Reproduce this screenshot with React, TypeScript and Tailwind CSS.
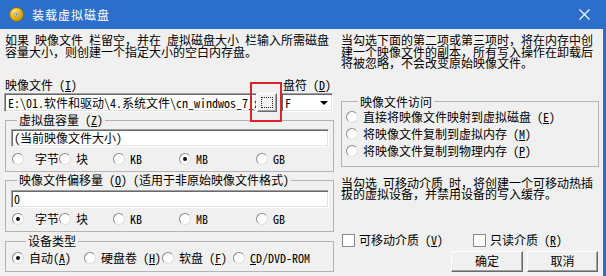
import React from "react";

const F = "font-['Noto_Sans_Mono_CJK_SC','Noto_Sans_CJK_SC',monospace]";
const sunken =
  "bg-white border border-t-[#a0a0a0] border-l-[#a0a0a0] border-r-white border-b-white shadow-[inset_1px_1px_0_#696969,inset_-1px_-1px_0_#e3e3e3]";
const raised =
  "bg-[#f0f0f0] border border-t-white border-l-white border-r-[#696969] border-b-[#696969] shadow-[inset_-1px_-1px_0_#a0a0a0]";

function K({ k }: { k: string }) {
  return (
    <>
      (<span className="underline underline-offset-[1px]">{k}</span>)
    </>
  );
}

function Radio({ on }: { on?: boolean }) {
  return (
    <span className="flex h-[12px] w-[12px] shrink-0 items-center justify-center rounded-full border border-t-[#8c8c8c] border-l-[#8c8c8c] border-r-[#dedede] border-b-[#dedede] bg-white">
      {on && <span className="h-[4px] w-[4px] rounded-full bg-[#111]" />}
    </span>
  );
}

function Opt({ on, className = "", children }: { on?: boolean; className?: string; children: React.ReactNode }) {
  return (
    <div className={`flex h-[12px] shrink-0 items-center gap-[5px] ${className}`}>
      <Radio on={on} />
      <span className="whitespace-nowrap leading-[12px]">{children}</span>
    </div>
  );
}

function Check({ children, className = "" }: { children: React.ReactNode; className?: string }) {
  return (
    <div className={`flex h-[13px] items-center gap-[4px] ${className}`}>
      <span className="h-[13px] w-[13px] shrink-0 border border-[#8a8a8a] bg-white" />
      <span className="whitespace-nowrap leading-[12px]">{children}</span>
    </div>
  );
}

function UnitRow({ sel }: { sel: number }) {
  return (
    <div className="flex pl-[6px]">
      <Opt on={sel === 0} className="w-[47px]">
        <span className="ml-[6px]">字节</span>
      </Opt>
      <Opt on={sel === 1} className="w-[54px]">块</Opt>
      <Opt on={sel === 2} className="w-[66px]">KB</Opt>
      <Opt on={sel === 3} className="w-[77px]">MB</Opt>
      <Opt on={sel === 4}>GB</Opt>
    </div>
  );
}

export default function App() {
  return (
    <div className={`relative flex h-[276px] w-[606px] flex-col overflow-hidden bg-[#f0f0f0] text-[12px] text-black ${F}`}>
      {/* title bar */}
      <div className="flex h-[29px] shrink-0 items-center bg-[#2b6fca] pl-[9px] pr-[16px]">
        <svg width="15" height="15" viewBox="0 0 16 16">
          <defs>
            <radialGradient id="cd" cx="0.4" cy="0.35" r="0.7">
              <stop offset="0" stopColor="#fff6c0" />
              <stop offset="0.45" stopColor="#f2c21a" />
              <stop offset="1" stopColor="#b98700" />
            </radialGradient>
          </defs>
          <circle cx="8" cy="8" r="7.3" fill="url(#cd)" stroke="#9c7400" strokeWidth="0.6" />
          <circle cx="8" cy="8" r="2.6" fill="#e8e8e8" stroke="#8a6a10" strokeWidth="0.6" />
          <circle cx="8" cy="8" r="1.1" fill="#5a5a5a" />
        </svg>
        <span className="ml-[8px] font-['Noto_Sans_CJK_SC',sans-serif] text-[12px] tracking-[1px] text-white">装载虚拟磁盘</span>
        <svg className="ml-auto" width="11" height="11" viewBox="0 0 11 11">
          <path d="M0.5 0.5L10.5 10.5M10.5 0.5L0.5 10.5" stroke="#fff" strokeWidth="1.1" />
        </svg>
      </div>

      <div className="flex min-h-0 flex-1">
        <div className="flex flex-1">
          {/* left column */}
          <div className="w-[336px] shrink-0 pl-[4px]">
            <p className="whitespace-nowrap pl-[1px] pt-[5px] leading-[11.5px]">
              如果 映像文件 栏留空，并在 虚拟磁盘大小 栏输入所需磁盘
              <br />
              容量大小，则创建一个指定大小的空白内存盘。
            </p>
            <div className="mt-[22px] flex h-[12px] leading-[12px]">
              <span className="w-[279px] pl-[1px]">
                映像文件 <K k="I" />
              </span>
              <span>
                盘符 <K k="D" />
              </span>
            </div>
            <div className="relative mt-[2px] flex h-[19px]">
              <div className={`flex w-[253px] items-center overflow-hidden whitespace-nowrap pl-[3px] ${sunken}`}>
                E:\01.软件和驱动\4.系统文件\cn_windwos_7_x64
              </div>
              <div className={`flex h-[19px] w-[20px] items-center justify-center ${raised}`}>
                <span className="h-[11px] w-[12px] border border-dotted border-[#222]" />
              </div>
              <div className={`ml-[4px] flex w-[52px] items-center pl-[3px] ${sunken}`}>
                <span>F</span>
                <span className="ml-auto mr-[4px] h-0 w-0 border-x-[4px] border-t-[4px] border-x-transparent border-t-black" />
              </div>
              <div className="absolute left-[246px] top-[-11px] h-[40px] w-[32px] border-2 border-[#d8262b]" />
            </div>

            <fieldset className="ml-[1px] mt-[2px] w-[329px] border border-[#b4b4b4] pb-[6px] pl-[5px] pr-[4px]">
              <legend className="ml-[6px] px-[2px] leading-[12px]">
                虚拟盘容量 <K k="Z" />
              </legend>
              <div className={`mt-[3px] flex h-[18px] items-center pl-[2px] ${sunken}`}>(当前映像文件大小)</div>
              <div className="-ml-[5px] mt-[6px]">
                <UnitRow sel={3} />
              </div>
            </fieldset>

            <fieldset className="ml-[1px] mt-[2px] w-[329px] border border-[#b4b4b4] pb-[6px] pl-[5px] pr-[4px]">
              <legend className="ml-[6px] px-[2px] leading-[12px] whitespace-nowrap">
                映像文件偏移量 <K k="O" />  (适用于非原始映像文件格式)
              </legend>
              <div className={`mt-[4px] flex h-[18px] items-center pl-[2px] ${sunken}`}>0</div>
              <div className="-ml-[5px] mt-[5px]">
                <UnitRow sel={0} />
              </div>
            </fieldset>

            <fieldset className="ml-[1px] mt-[3px] w-[329px] border border-[#b4b4b4] pb-[7px] pl-[6px]">
              <legend className="ml-[14px] px-[2px] leading-[12px]">设备类型</legend>
              <div className="mt-[5px] flex">
                <Opt on className="w-[72px]">
                  自动<K k="A" />
                </Opt>
                <Opt className="w-[78px]">
                  硬盘卷 <K k="H" />
                </Opt>
                <Opt className="w-[71px]">
                  软盘 <K k="F" />
                </Opt>
                <Opt>
                  <span className="underline underline-offset-[1px]">C</span>D/DVD-ROM
                </Opt>
              </div>
            </fieldset>
          </div>

          {/* right column */}
          <div className="ml-[5px] w-[258px] shrink-0">
            <p className="whitespace-nowrap pt-[5px] leading-[11.5px]">
              当勾选下面的第二项或第三项时，将在内存中创
              <br />
              建一个映像文件的副本，所有写入操作在卸载后
              <br />
              将被忽略，不会改变原始映像文件。
            </p>
            <fieldset className="mt-[27px] border border-[#b4b4b4] pb-[9px] pl-[4px]">
              <legend className="ml-[12px] px-[2px] leading-[12px]">映像文件访问</legend>
              <div className="mt-[3px] flex flex-col gap-[5px]">
                <Opt>
                  直接将映像文件映射到虚拟磁盘 <K k="E" />
                </Opt>
                <Opt>
                  将映像文件复制到虚拟内存 <K k="M" />
                </Opt>
                <Opt>
                  将映像文件复制到物理内存 <K k="P" />
                </Opt>
              </div>
            </fieldset>
            <p className="mt-[10px] whitespace-nowrap leading-[11.5px]">
              当勾选 可移动介质 时，将创建一个可移动热插
              <br />
              拔的虚拟设备，并禁用设备的写入缓存。
            </p>
            <div className="mt-[34px] flex pl-[1px]">
              <Check className="w-[131px]">
                可移动介质 <K k="V" />
              </Check>
              <Check>
                只读介质 <K k="R" />
              </Check>
            </div>
            <div className="mt-[4px] flex justify-end gap-[4px] pr-[1px]">
              <div className={`flex h-[21px] w-[72px] items-center justify-center ${raised}`}>确定</div>
              <div className={`flex h-[21px] w-[71px] items-center justify-center ${raised}`}>取消</div>
            </div>
          </div>
        </div>
        <div className="w-[3px] shrink-0 bg-[#2b6fca]" />
      </div>
    </div>
  );
}
